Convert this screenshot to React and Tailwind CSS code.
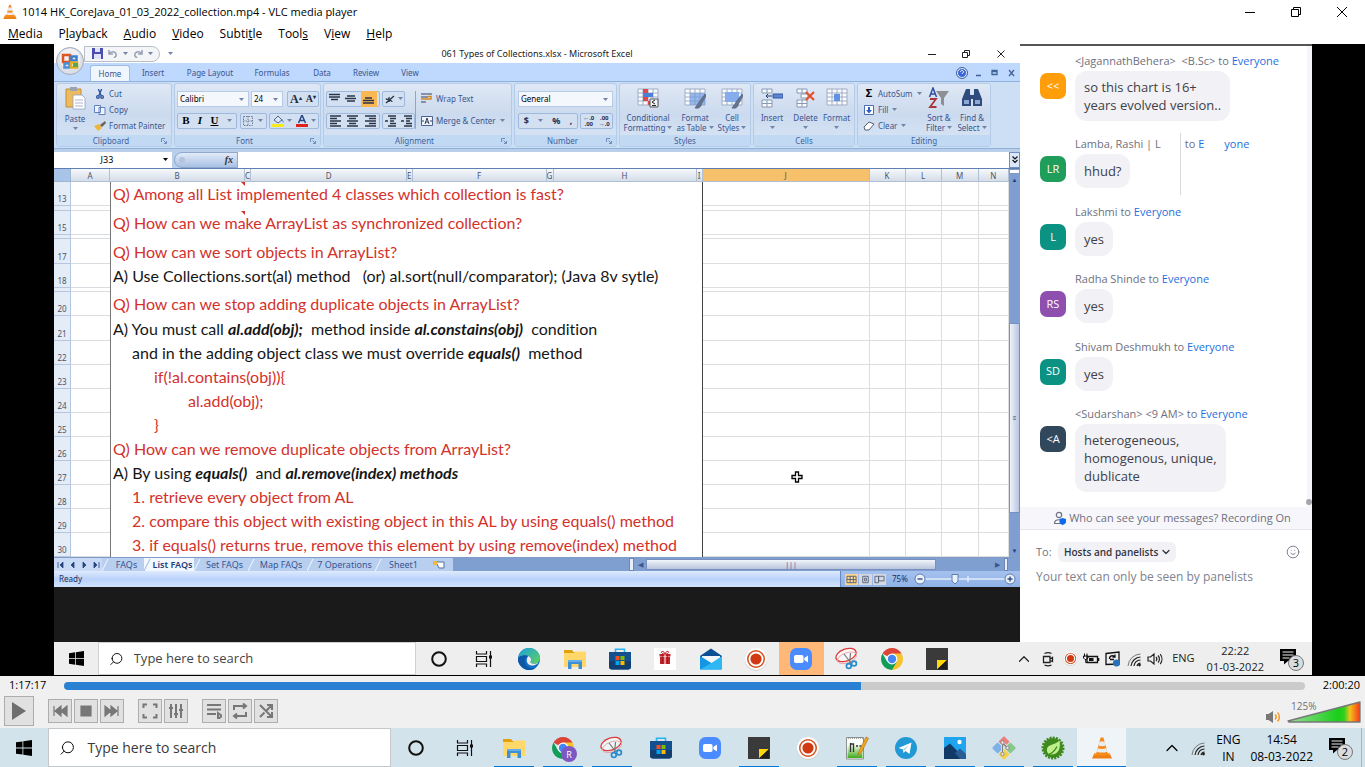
import React from "react";
import { ChevronDown, ChevronUp, Search, Smile } from "lucide-react";

/* ---------- application icons ---------- */

const Cone = ({ className }) => (
  <svg viewBox="0 0 24 24" className={className}>
    <path d="M4.5 17h15l2.5 5.5H2z" fill="#f07f13" />
    <path d="M4.5 17h15l.8 1.8H3.7z" fill="#ffa53a" />
    <path d="M10.6 1.5h2.8L18 18.6c-2.6 1.5-9.4 1.5-12 0z" fill="#f58a1f" />
    <path d="M9.5 5.4h5l1.1 4.2c-2 .8-5.2.8-7.2 0z" fill="#e9edf0" />
    <path d="M7.7 12.3c2.500 1 6.100 1 8.600 0l.9 3.400c-2.900 1.200-7.500 1.200-10.400 0z" fill="#e9edf0" />
  </svg>
);

const WindowsLogo = ({ className }) => (
  <svg viewBox="0 0 16 16" className={className} fill="#000">
    <path d="M0 2.3 6.500 1.400V7.600H0zM7.300 1.300 16 0V7.600H7.300zM0 8.400H6.500V14.600L0 13.700zM7.300 8.400H16V16L7.300 14.700z" />
  </svg>
);

const Cortana = () => (
  <svg viewBox="0 0 24 24" className="size-6">
    <circle cx="12" cy="12" r="6.800" fill="none" stroke="#111" strokeWidth="2" />
  </svg>
);

const TaskView = () => (
  <svg viewBox="0 0 24 24" className="size-6" fill="none" stroke="#111" strokeWidth="1.200">
    <path d="M4.500 4v3h10V4M4.500 20v-3h10v3M4.500 9.500h10v5h-10zM18.500 4v16" />
    <path d="M17 8.500h3v3h-3z" fill="#111" stroke="none" />
  </svg>
);

const Folder = () => (
  <svg viewBox="0 0 24 24" className="size-6">
    <path d="M1 3h8l1.500 2H22v15H1z" fill="#e0a10d" />
    <path d="M1 6h10l1-1.500h11V20H1z" fill="#ffd869" />
    <path d="M5 13h14v9h-3.500v-5h-7v5H5z" fill="#3f8fd6" />
    <path d="M5 13h14v2H5z" fill="#62aeea" />
  </svg>
);

const Edge = () => (
  <svg viewBox="0 0 24 24" className="size-6">
    <defs>
      <linearGradient id="edgeTop" x1="0" x2="1" y1="0" y2="1">
        <stop offset="0" stopColor="#1ca0e0" />
        <stop offset="1" stopColor="#5fd35a" />
      </linearGradient>
    </defs>
    <circle cx="12" cy="12" r="11" fill="#1070c8" />
    <path d="M1.300 11C2.500 4.500 7 1 12 1c6.500 0 11 5 11 9.800 0 4-3 6-6 6-3 0-4-1.300-3.500-2.300 1.500-2 .8-5-2.500-5.700C7 8 3 8.500 1.300 11z" fill="url(#edgeTop)" />
    <path d="M11 9c-3 1.500-4 5-2.500 8 1.700 4 6.500 5.500 10.500 3.500-3 3-8 3.300-12 1C2 18 .3 14 1.300 11 3 8.300 7.500 7.600 11 9z" fill="#0d57a6" />
    <path d="M11.300 9c2.500.8 3.600 3.500 2.200 5.500-.5 1 .7 2.500 3.500 2.300 2 0 3.500-.7 4.500-1.800-1 2.500-4.200 4-7.500 3.500-4-.8-5.700-5.500-2.700-9.500z" fill="#ededed" />
  </svg>
);

const Store = () => (
  <svg viewBox="0 0 24 24" className="size-6">
    <path d="M7.500 6V2.200h9V6" fill="none" stroke="#27b5f0" strokeWidth="1.600" />
    <path d="M1 5h22v14.500c0 2-1 3-3 3H4c-2 0-3-1-3-3z" fill="#12508f" />
    <path d="M1 14h22v5.500c0 2-1 3-3 3H4c-2 0-3-1-3-3z" fill="#123f70" />
    <path d="M7.500 9h4v4h-4z" fill="#f25022" />
    <path d="M12.500 9h4v4h-4z" fill="#7fba00" />
    <path d="M7.500 14h4v4h-4z" fill="#00a4ef" />
    <path d="M12.500 14h4v4h-4z" fill="#ffb900" />
  </svg>
);

const Gift = () => (
  <svg viewBox="0 0 24 24" className="size-6">
    <path d="M1 1h22v22H1z" fill="#fff" />
    <path d="M7 10h10v7H7zM6.500 7h11v2.500h-11z" fill="#c4242a" />
    <path d="M9.400 7v10M14.600 7v10" stroke="#8f1519" strokeWidth=".7" />
    <path d="M11.500 7h1v10h-1z" fill="#fff" />
    <path d="M12 7c-5 0-4-3.500-2-2.500C11.500 5 12 7 12 7s.5-2 2-2.500c2-1 3 2.500-2 2.500z" fill="none" stroke="#c4242a" />
  </svg>
);

const MailIcon = () => (
  <svg viewBox="0 0 24 24" className="size-6">
    <path d="M1 9 12 1.500 23 9v3H1z" fill="#0d4f94" />
    <path d="M3 9h18v7H3z" fill="#f2f7fb" />
    <path d="M1 9v13.500h22z" fill="#1596e2" />
    <path d="M23 9v13.500H1L14 15z" fill="#2fb7f3" />
  </svg>
);

const Recorder = ({ className = "size-6" }) => (
  <svg viewBox="0 0 24 24" className={className}>
    <circle cx="12" cy="12.500" r="11" fill="#b9b1ac" />
    <circle cx="12" cy="12" r="11" fill="#fff" />
    <circle cx="12" cy="12" r="9" fill="#d4501f" />
    <circle cx="12" cy="12" r="7.500" fill="#fff" />
    <circle cx="12" cy="12" r="5.600" fill="#cf3a12" />
  </svg>
);

const Zoom = () => (
  <svg viewBox="0 0 24 24" className="size-6">
    <rect x="1" y="1" width="22" height="22" rx="6.500" fill="#4a8cff" />
    <rect x="5" y="8" width="9.500" height="8" rx="1.800" fill="#fff" />
    <path d="m15.300 11 3.700-2.500v7L15.300 13z" fill="#fff" />
  </svg>
);

const Snip = () => (
  <svg viewBox="0 0 24 24" className="size-6">
    <g transform="rotate(-20 11 8)" fill="none">
      <ellipse cx="11" cy="8" rx="10.500" ry="6" stroke="#dd3c3c" strokeWidth="1.300" fill="#fff" fillOpacity=".6" />
      <ellipse cx="11" cy="11" rx="10" ry="5" stroke="#e8a0a0" strokeWidth=".8" />
    </g>
    <path d="m9 7 7 9M15.500 6l-.8 10" stroke="#777" strokeWidth="1.200" />
    <circle cx="13.800" cy="19" r="2.400" fill="none" stroke="#2b8ccc" strokeWidth="1.700" />
    <circle cx="19" cy="16.500" r="2.400" fill="none" stroke="#2b8ccc" strokeWidth="1.700" />
  </svg>
);

const Chrome = ({ badge }) => (
  <svg viewBox="0 0 24 24" className="size-6 overflow-visible">
    <path d="M12 12 2.500 6.500A11 11 0 0 1 21.500 6.500z" fill="#db4437" />
    <path d="M12 12V6.500h9.500A11 11 0 0 1 12 23z" fill="#f6c32b" />
    <path d="M12 12 7.200 14.800 2.500 6.500A11 11 0 0 0 12 23l4.800-8.200z" fill="#0f9d58" />
    <circle cx="12" cy="12" r="5.400" fill="#fff" />
    <circle cx="12" cy="12" r="4.200" fill="#4285f4" />
    {badge && (
      <g>
        <circle cx="18" cy="18" r="8" fill="#7e57c2" />
        <text x="18" y="21.500" textAnchor="middle" fontSize="9" fontFamily="Open Sans, sans-serif" fill="#fff">{badge}</text>
      </g>
    )}
  </svg>
);

const StickyNote = () => (
  <svg viewBox="0 0 24 24" className="size-6">
    <path d="M1 1h22v22H1z" fill="#3a3a3a" />
    <path d="M12 13h10L12 22.500z" fill="#ffd60a" />
    <path d="M12 22.500 22 13v9.500z" fill="#1f1f1f" />
  </svg>
);

const NotePad = () => (
  <svg viewBox="0 0 24 24" className="size-6">
    <defs>
      <linearGradient id="padFill" x1="0" x2="0" y1="0" y2="1">
        <stop offset="0" stopColor="#f4fbe9" />
        <stop offset="1" stopColor="#3fa91c" />
      </linearGradient>
    </defs>
    <path d="M1.500 1.500h17V23h-17z" fill="#fbfdf8" stroke="#777" strokeWidth=".8" />
    <path d="M2.500 9h15v13h-15z" fill="url(#padFill)" />
    <path d="M3 2h15" stroke="#888" strokeWidth="1.500" strokeDasharray="1 1" />
    <path d="M5.500 7v9M5.500 8h3v8M11 10h2M14.500 10h2" stroke="#333" strokeWidth="1.300" fill="none" />
    <path d="m13 19 1-4L21 1l2.500 1.200-7 14z" fill="#f3a51d" stroke="#a86a12" strokeWidth=".6" />
  </svg>
);

const Telegram = () => (
  <svg viewBox="0 0 24 24" className="size-6">
    <circle cx="12" cy="12" r="11" fill="#2298d4" />
    <path d="m4.500 12 13-5.500L15.500 18l-4-3-2 2-.5-3.500z" fill="#fff" />
    <path d="m9 13.500 6-4.500-4.500 5.500z" fill="#a9cfe6" />
  </svg>
);

const Photos = () => (
  <svg viewBox="0 0 24 24" className="size-6">
    <path d="M1 1h22v22H1z" fill="#1fa4ee" />
    <path d="M1 12 7 7.500 22 23H1z" fill="#123a66" />
    <path d="m12 17 5-4.500 6 5.500v5H17z" fill="#2a5d94" />
    <circle cx="16.500" cy="6" r="2.200" fill="#fff" />
  </svg>
);

const GitIcon = () => (
  <svg viewBox="0 0 24 24" className="size-6">
    <g transform="rotate(45 12 12)">
      <rect x="3.500" y="3.500" width="8" height="8" rx="1" fill="#ef7f7f" />
      <rect x="12.500" y="3.500" width="8" height="8" rx="1" fill="#86c98a" />
      <rect x="3.500" y="12.500" width="8" height="8" rx="1" fill="#7fb0e8" />
      <rect x="12.500" y="12.500" width="8" height="8" rx="1" fill="#f2d24b" />
    </g>
    <path d="M10.500 6v12M10.500 7l5 5" stroke="#e6e6e6" strokeWidth="3" fill="none" />
    <path d="M10.500 6v12M10.500 7l5 5" stroke="#7d7d7d" strokeWidth="1.200" fill="none" />
    <circle cx="10.500" cy="6.500" r="1.700" fill="#e6e6e6" stroke="#7d7d7d" strokeWidth=".8" />
    <circle cx="15.500" cy="12" r="1.700" fill="#e6e6e6" stroke="#7d7d7d" strokeWidth=".8" />
    <circle cx="10.500" cy="18" r="1.700" fill="#e6e6e6" stroke="#7d7d7d" strokeWidth=".8" />
  </svg>
);

const Spring = () => (
  <svg viewBox="0 0 24 24" className="size-6">
    <circle cx="12" cy="12" r="10.300" fill="none" stroke="#3f8a1f" strokeWidth="2.400" strokeDasharray="2 1.200" />
    <circle cx="12" cy="12" r="10" fill="#3f8a1f" />
    <path d="M18.500 4.500c1.500 8.500-1.500 14-8 14-3 0-5-2-4.500-5.500C6.500 8 14 9.500 18.500 4.500z" fill="#c0f08c" />
    <path d="M4.500 19.500c5-1 9-3.500 11.500-9" stroke="#3f8a1f" strokeWidth="1.300" fill="none" />
  </svg>
);

/* ---------- tray icons ---------- */

const Wifi = () => (
  <svg viewBox="0 0 16 16" className="size-4" fill="none" stroke="#222">
    <path d="M2 15A13 13 0 0 1 14.500 3" stroke="#777" />
    <path d="M5 15a10 10 0 0 1 9.500-9M8 15a7 7 0 0 1 6.500-6M11 15a4 4 0 0 1 3.500-3" strokeWidth="1.200" />
    <circle cx="13.500" cy="14" r="1.400" fill="#222" stroke="none" />
  </svg>
);

const Notice = ({ count }) => (
  <span className="relative flex size-5 items-start">
    <svg viewBox="0 0 18 16" className="h-4 w-[18px]">
      <path d="M0 0h16v12H8l-4 3.500V12H0z" fill="#000" />
      <path d="M2.500 3h11M2.500 6h11M2.500 9h7" stroke="#eee" />
    </svg>
    <span className="absolute top-1.5 left-2 flex size-4 items-center justify-center rounded-full border border-[#777] bg-[#d9dcde] text-[11px] leading-none text-black">
      {count}
    </span>
  </span>
);

const Speaker = () => (
  <svg viewBox="0 0 18 16" className="h-4 w-[18px]" fill="none" stroke="#222" strokeWidth="1.200">
    <path d="M2 6h2.500L8 3v10l-3.500-3H2zM10 6a3 3 0 0 1 0 4M12 4.500a5 5 0 0 1 0 7M14.200 3a8 8 0 0 1 0 10" />
  </svg>
);

const MeetNow = () => (
  <svg viewBox="0 0 16 16" className="size-4" fill="none" stroke="#222" strokeWidth="1.300">
    <path d="M3.500 5.500h6.500v6H3.500zM10 8l2.500-1.500v4L10 9.500M4.500 2.500c2-1 5-1 7 0M4.500 14c2 1 5 1 7 0" />
  </svg>
);

const Battery = () => (
  <svg viewBox="0 0 18 16" className="h-4 w-[18px]">
    <path d="M5 5.500h10.500v6H5z" fill="none" stroke="#111" strokeWidth="1.300" />
    <path d="M7 7h4.500v3H7zM16 7h1.300v3H16z" fill="#111" />
    <path d="M2.500 2.500v3M5 2.500v3M1.500 5h4.500v2L4.500 8.500H3L1.500 7zM3.700 8.500v3h2" stroke="#111" fill="none" />
  </svg>
);

const Screen = () => (
  <svg viewBox="0 0 18 16" className="h-4 w-[18px]" fill="none" stroke="#111" strokeWidth="1.300">
    <path d="M2 2.500 15 1v12L2 13.500z" />
    <path d="M5.500 8A3 3 0 0 1 11 6M11 3.500V6H8.500M6 8.500h4" />
    <circle cx="12.500" cy="12" r="3.500" fill="#2a6fb8" stroke="none" />
  </svg>
);

/* ---------- taskbars ---------- */

const INNER_APPS = [
  { name: "Cortana", icon: <Cortana /> },
  { name: "Task View", icon: <TaskView /> },
  { name: "Edge", icon: <Edge /> },
  { name: "File Explorer", icon: <Folder /> },
  { name: "Store", icon: <Store /> },
  { name: "Gifts", icon: <Gift /> },
  { name: "Mail", icon: <MailIcon /> },
  { name: "Recorder", icon: <Recorder /> },
  { name: "Zoom", icon: <Zoom />, active: true },
  { name: "Snipping Tool", icon: <Snip /> },
  { name: "Chrome", icon: <Chrome /> },
  { name: "Sticky Notes", icon: <StickyNote /> },
];

const OUTER_APPS = [
  { name: "Cortana", icon: <Cortana /> },
  { name: "Task View", icon: <TaskView /> },
  { name: "File Explorer", icon: <Folder />, open: true },
  { name: "Chrome", icon: <Chrome badge="R" />, open: true },
  { name: "Snipping Tool", icon: <Snip />, open: true },
  { name: "Store", icon: <Store /> },
  { name: "Zoom", icon: <Zoom /> },
  { name: "Sticky Notes", icon: <StickyNote />, open: true },
  { name: "Recorder", icon: <Recorder /> },
  { name: "Notepad++", icon: <NotePad />, open: true },
  { name: "Telegram", icon: <Telegram />, open: true },
  { name: "Photos", icon: <Photos />, open: true },
  { name: "Git", icon: <GitIcon />, open: true },
  { name: "Spring Tool Suite", icon: <Spring />, open: true },
  { name: "VLC", icon: <Cone className="size-6" />, open: true, active: true },
];

function InnerTaskbar() {
  return (
    <div className="flex h-[34px] shrink-0 items-stretch border-b border-black bg-[#eeeeee] text-[11px] text-[#222]">
      <button aria-label="Start" className="flex w-[44px] items-center justify-center"><WindowsLogo className="size-[15px]" /></button>
      <label className="flex w-[318px] items-center gap-2.5 border border-[#d0d0d0] bg-white pl-2.5">
        <Search className="size-4 -scale-x-100 text-black" strokeWidth={1.5} />
        <input aria-label="Search shared desktop" placeholder="Type here to search" className="w-full text-[13px] outline-none placeholder:text-[#444]" />
      </label>
      <div className="flex w-[544px]">
        {INNER_APPS.map((a) => (
          <button key={a.name} aria-label={a.name} className={"flex flex-1 items-center justify-center " + (a.active ? "bg-[#ffb878]" : "")}>
            {a.icon}
          </button>
        ))}
      </div>
      <div className="ml-auto flex items-center gap-1 pr-3">
        <ChevronUp className="size-[18px]" strokeWidth={1.6} />
        <span className="flex w-[22px] justify-center"><MeetNow /></span>
        <Recorder className="size-[15px]" />
        <Battery />
        <Screen />
        <Wifi />
        <Speaker />
        <span className="ml-1">ENG</span>
        <span className="ml-2 flex flex-col items-center leading-4"><span>22:22</span><span>01-03-2022</span></span>
        <span className="ml-3"><Notice count="3" /></span>
      </div>
    </div>
  );
}

function OuterTaskbar() {
  return (
    <footer className="flex h-[39px] shrink-0 items-stretch bg-[#d3e3ec] text-[12px] text-black">
      <button aria-label="Start menu" className="flex w-[48px] items-center justify-center"><WindowsLogo className="size-4" /></button>
      <label className="flex w-[343px] items-center gap-3 border border-[#c4c8ca] bg-white pl-2.5">
        <Search className="size-[18px] -scale-x-100 text-black" strokeWidth={1.400} />
        <input aria-label="Search" placeholder="Type here to search" className="w-full text-[14px] outline-none placeholder:text-[#3a3a3a]" />
      </label>
      {OUTER_APPS.map((a) => (
        <button key={a.name} aria-label={a.name} className={"flex w-[49px] flex-col items-center justify-end " + (a.active ? "bg-[#eef4f8]" : "")}>
          <span className="flex flex-1 items-center pt-0.5">{a.icon}</span>
          <span className={"h-px " + (a.open ? (a.active ? "w-full bg-[#0078d7]" : "w-10 bg-[#0078d7]") : "w-0")} />
        </button>
      ))}
      <div className="ml-auto flex items-center gap-2 pr-[3px]">
        <ChevronUp className="size-5" strokeWidth={1.500} />
        <Wifi />
        <span className="flex w-7 flex-col items-center leading-[17px]"><span>ENG</span><span>IN</span></span>
        <span className="flex flex-col items-center leading-[17px]"><span>14:54</span><span>08-03-2022</span></span>
        <span className="ml-2"><Notice count="2" /></span>
        <span className="ml-1 h-full w-px self-stretch bg-[#a9b6bd]" />
      </div>
    </footer>
  );
}

/* ---------- spreadsheet ribbon ---------- */

const Caret = () => (
  <svg viewBox="0 0 5 3" className="h-[3px] w-[5px] shrink-0"><path d="M0 0h5L2.500 3z" fill="#7284a8" /></svg>
);

function Group({ label, launcher, className, children }) {
  return (
    <section className={"flex flex-col overflow-hidden rounded-[3px] border border-[#b4cbe8] bg-linear-to-b from-[#dfe8f5] via-[#cbdaee] to-[#d8e6f6] " + className}>
      <div className="flex flex-1 items-center">{children}</div>
      <div className="flex h-[11px] items-center bg-[#c1d9f3] px-1 text-[#41639d]">
        <span className="flex-1 text-center">{label}</span>
        {launcher && <svg viewBox="0 0 6 6" className="size-1.5" fill="none" stroke="#6f8cb8"><path d="M.5 4V.5H4M2.500 2.500 5 5M5.500 3v2.500H3" /></svg>}
      </div>
    </section>
  );
}

const Box = ({ className, children }) => (
  <div className={"flex h-4 items-center justify-around rounded-[2px] border border-[#9fb9dd] bg-[#d3e0f2] " + (className || "")}>{children}</div>
);

function RibbonSelect({ label, value, className }) {
  return (
    <span className={"relative flex h-4 items-center border border-[#b6cbe6] bg-[#f4f8fd] " + className}>
      <select aria-label={label} defaultValue={value} className="w-full appearance-none bg-transparent px-0.5 text-[8px] text-black outline-none">
        <option>{value}</option>
      </select>
      <span className="absolute top-1.5 right-1"><Caret /></span>
    </span>
  );
}

const LINE_SETS = {
  top: "M0 1.500h11M0 4h11M2 6.500h7",
  middle: "M2 3h8M0 5.500h11M2 8h8",
  bottom: "M2 5h7M0 7.500h11M0 10h11",
  left: "M0 1h11M0 3.500h7M0 6h11M0 8.500h7M0 11h11",
  center: "M0 1h11M2 3.500h7M0 6h11M2 8.500h7M0 11h11",
  right: "M0 1h11M4 3.500h7M0 6h11M4 8.500h7M0 11h11",
  indent: "M3 1h8M5 3.500h6M5 6h4M5 8.500h6M3 11h8M0 6h3",
};

const Lines = ({ kind }) => (
  <svg viewBox="0 0 11 12" className="h-3 w-[11px]" fill="none" stroke="#2b3549" strokeWidth="1.300"><path d={LINE_SETS[kind]} /></svg>
);

const GridGlyph = ({ children }) => (
  <svg viewBox="0 0 22 22" className="size-[22px]">
    <path d="M1 2h20v16H1z" fill="#f8fafd" />
    <path d="M1 2h20v16H1zM1 6h20M1 10h20M1 14h20M6 2v16M11 2v16M16 2v16" fill="none" stroke="#98a6bf" strokeWidth=".9" />
    {children}
  </svg>
);

const Brush = () => <path d="m21 7-6 8-4 6c4 1 6-1 6.500-4L22 9z" fill="#6a7486" stroke="#3d5b8f" strokeWidth=".6" />;

function BigButton({ icon, lines, className }) {
  return (
    <button className={"flex flex-col items-center leading-[10px] " + className}>
      {icon}
      <span className="mt-1 whitespace-nowrap">{lines[0]}</span>
      <span className="flex h-2.5 items-center gap-0.5 whitespace-nowrap">{lines[1]}<Caret /></span>
    </button>
  );
}

const SmallButton = ({ icon, children, caret }) => (
  <button className="flex h-4 items-center gap-0.5 whitespace-nowrap"><span className="flex w-3.5 justify-center">{icon}</span>{children}{caret && <span className="ml-0.5"><Caret /></span>}</button>
);

function Ribbon() {
  return (
    <div className="flex h-[68px] gap-0.5 border-t border-b border-[#8fb0dc] bg-[#cddff5] px-0.5 py-px text-[8px] text-[#3a5590]">
      <Group label="Clipboard" launcher className="w-[116px]">
        <BigButton className="w-[36px]" lines={["Paste", ""]} icon={
          <svg viewBox="0 0 22 24" className="h-6 w-[22px]">
            <path d="M2 3h15v18H2z" fill="#edbb5d" stroke="#c28f36" /><path d="M6 1h7v4H6z" fill="#9aa3b0" />
            <path d="M9 9h9l3 3v11H9z" fill="#fff" stroke="#93a3c0" strokeWidth=".8" /><path d="M11 14h8M11 17h8M11 20h8" stroke="#a9b7d0" />
          </svg>} />
        <div className="flex flex-col">
          <SmallButton icon={<svg viewBox="0 0 10 12" className="h-2.5 w-2.5" fill="none" stroke="#2d519b" strokeWidth="1.600"><path d="m3 0 3.500 8M7 0 3.500 8" /><circle cx="2.500" cy="9.500" r="1.600" /><circle cx="7.500" cy="9.500" r="1.600" /></svg>}>Cut</SmallButton>
          <SmallButton icon={<svg viewBox="0 0 12 10" className="h-2.5 w-3"><path d="M.5.500h6v7h-6zM5 2.500h6v7H5z" fill="#eef4fd" stroke="#5377b5" strokeWidth=".9" /></svg>}>Copy</SmallButton>
          <SmallButton icon={<svg viewBox="0 0 12 10" className="h-2.5 w-3"><path d="m0 5 5-2 3 4-4 3z" fill="#ecb53f" /><path d="m6 4 5-4 1 2-4 4z" fill="#6d6250" /></svg>}>Format Painter</SmallButton>
        </div>
      </Group>

      <Group label="Font" launcher className="w-[147px]">
        <div className="flex flex-1 flex-col gap-1.5 px-0.5">
          <div className="flex items-center gap-0.5">
            <RibbonSelect label="Font" value="Calibri" className="w-[72px]" />
            <RibbonSelect label="Font size" value="24" className="w-[32px]" />
            <Box className="ml-0.5 w-[32px] font-['Liberation_Serif',serif] font-bold text-[#222c40]"><button className="text-[12px]">A<sup className="text-[6px]">▴</sup></button><button className="text-[10px]">A<sup className="text-[6px]">▾</sup></button></Box>
          </div>
          <div className="flex items-center justify-between">
            <Box className="w-[60px] font-['Liberation_Serif',serif] text-[11px] text-black"><button className="font-bold">B</button><button className="font-bold italic">I</button><button className="font-bold underline">U</button><Caret /></Box>
            <Box className="w-[27px]"><svg viewBox="0 0 10 10" className="size-2.5" fill="none" stroke="#6c7b98" strokeDasharray="1.500 1"><path d="M.5.500h9v9h-9zM5 0v10M0 5h10" /></svg><Caret /></Box>
            <Box className="w-[50px]">
              <svg viewBox="0 0 12 12" className="size-3"><path d="m2 5 4-4 4 4-4 3z" fill="#dce6f5" stroke="#50638c" /><path d="M10 4c2 2 1.500 3 1 4z" fill="#2d6cc8" /><path d="M0 9h12v3H0z" fill="#f6ea1c" /></svg><Caret />
              <svg viewBox="0 0 12 12" className="size-3"><path d="m2.500 8 3.500-8 3.500 8M4 5.500h4" fill="none" stroke="#28458c" strokeWidth="1.500" /><path d="M0 9h12v3H0z" fill="#e3211a" /></svg><Caret />
            </Box>
          </div>
        </div>
      </Group>

      <Group label="Alignment" launcher className="w-[189px]">
        <div className="flex w-[92px] flex-col gap-1.5 border-r border-[#8ca6cc] pl-0.5">
          <div className="flex gap-0.5">
            <Box className="w-[54px]"><Lines kind="top" /><Lines kind="middle" /><span className="flex h-4 w-4 items-center justify-center bg-[#fbb753]"><Lines kind="bottom" /></span></Box>
            <Box className="w-[23px]"><svg viewBox="0 0 10 10" className="size-2.5" fill="none" stroke="#222c40" strokeWidth="1.200"><path d="M1 9 9 2M1 4.500a1.500 1.500 0 1 0 3-1.500M4 8c0-2 3-2 3 0" /></svg><Caret /></Box>
          </div>
          <div className="flex gap-0.5">
            <Box className="w-[54px]"><Lines kind="left" /><Lines kind="center" /><Lines kind="right" /></Box>
            <Box className="w-[33px]"><Lines kind="indent" /><Lines kind="indent" /></Box>
          </div>
        </div>
        <div className="flex flex-col gap-1.5 pl-1">
          <SmallButton icon={<svg viewBox="0 0 12 11" className="h-[11px] w-3" fill="none"><path d="M0 1h11M0 4h7M0 9h5" stroke="#33415f" /><path d="M0 6h10V3.500H7" stroke="#d48a1c" strokeWidth="1.500" /></svg>}>Wrap Text</SmallButton>
          <SmallButton caret icon={<svg viewBox="0 0 12 10" className="h-2.5 w-3"><path d="M.5.500h11v9H.500z" fill="#f2f6fc" stroke="#4c648f" /><path d="M4 8l2-6 2 6M4.500 6h3M1 5h2M9 5h2" stroke="#33415f" fill="none" /></svg>}>Merge &amp; Center</SmallButton>
        </div>
      </Group>

      <Group label="Number" launcher className="w-[103px]">
        <div className="flex flex-1 flex-col gap-1.5 px-[3px]">
          <RibbonSelect label="Number format" value="General" className="w-full" />
          <div className="flex gap-0.5">
            <Box className="w-[60px] text-[9px] font-bold text-[#1f2d4f]"><button>$</button><Caret /><button>%</button><button>,</button></Box>
            <Box className="flex-1 text-[6px] leading-[6px] font-bold text-[#1f2d4f]"><button>←.0<br />.00</button><button>.00<br />→.0</button></Box>
          </div>
        </div>
      </Group>

      <Group label="Styles" className="w-[132px]">
        <BigButton className="w-[56px]" lines={["Conditional", "Formatting"]} icon={<GridGlyph><path d="M6 2h5v4H6zM6 10h5v4H6zM11 14h5v4h-5z" fill="#dd4a4a" /><path d="M6 6h10v4H6z" fill="#4d80d4" /><path d="M13 12h8v8h-8z" fill="#eef2f8" stroke="#555" /><path d="m18 13-3 2 3 2M15 18.500h4" stroke="#222" fill="none" /></GridGlyph>} />
        <BigButton className="w-[38px]" lines={["Format", "as Table"]} icon={<GridGlyph><path d="M6 6h15v12H6z" fill="#6f9be0" fillOpacity=".7" /><Brush /></GridGlyph>} />
        <BigButton className="w-[36px]" lines={["Cell", "Styles"]} icon={<GridGlyph><path d="M4 5h14v10H4z" fill="#85acec" /><Brush /></GridGlyph>} />
      </Group>

      <Group label="Cells" className="w-[102px]">
        <BigButton className="w-[36px]" lines={["Insert", ""]} icon={<svg viewBox="0 0 22 22" className="size-[22px]"><path d="M1 2h10v4H1zM1 13h10v7H1zM6 2v4M6 13v7M1 16.500h10" fill="#f8fafd" stroke="#8898b5" /><path d="M12 7h10v4H12z" fill="#5f86d4" stroke="#33579f" /><path d="M11 9H5m2-2L5 9l2 2" stroke="#223f77" fill="none" /></svg>} />
        <BigButton className="w-[31px]" lines={["Delete", ""]} icon={<svg viewBox="0 0 22 22" className="size-[22px]"><path d="M2 2h10v4H2zM6 7h7v4H6zM2 13h10v7H2zM7 2v4M7 13v7M2 16.500h10" fill="#f8fafd" stroke="#8898b5" /><path d="m11 5 8 8M19 5l-8 8" stroke="#e4502e" strokeWidth="2.200" /></svg>} />
        <BigButton className="w-[31px]" lines={["Format", ""]} icon={<GridGlyph><path d="M8 7h6v7H8z" fill="#5f92e4" /></GridGlyph>} />
      </Group>

      <Group label="Editing" className="w-[134px]">
        <div className="flex w-[64px] flex-col pl-1">
          <SmallButton caret icon={<b className="text-[11px] text-black">Σ</b>}>AutoSum</SmallButton>
          <SmallButton caret icon={<svg viewBox="0 0 10 10" className="size-2.5"><path d="M.5.500h9v9h-9z" fill="#fff" stroke="#4a6db0" /><path d="M4 2h2v3h2L5 8.500 2 5h2z" fill="#2d5fc4" /></svg>}>Fill</SmallButton>
          <SmallButton caret icon={<svg viewBox="0 0 12 10" className="h-2.5 w-3"><path d="m1 6 5-5 5 2-5 6H2z" fill="#fff" stroke="#555f74" /></svg>}>Clear</SmallButton>
        </div>
        <BigButton className="w-[34px]" lines={["Sort &", "Filter"]} icon={<svg viewBox="0 0 22 22" className="size-[22px]"><path d="m1.500 10 3.500-9 3.500 9M3 7h4" fill="none" stroke="#2c50a0" strokeWidth="1.500" /><path d="M2 12h6l-6 8h6.500" fill="none" stroke="#a8343c" strokeWidth="1.800" /><path d="M8 4h13l-5 7v8l-3-2v-6z" fill="#8f8f93" /></svg>} />
        <BigButton className="w-[32px]" lines={["Find &", "Select"]} icon={<svg viewBox="0 0 22 22" className="size-[22px]" fill="#2f4a7d"><path d="M5 2h4v5l1 3v9H1v-7zM13 2h4l4 10v7h-9v-9l1-3zM9 8h4v4H9z" /><path d="M3 13h5v4H3zM14 13h5v4h-5z" fill="#8fa8d4" /></svg>} />
      </Group>
    </div>
  );
}

/* ---------- spreadsheet grid ---------- */

const COLUMNS = [
  ["A", "w-[39px]"], ["B", "w-[135px]"], ["C", "w-[6px]"], ["D", "w-[156px]"], ["E", "w-[5px]"], ["F", "w-[134px]"], ["G", "w-[7px]"],
  ["H", "w-[143px]"], ["I", "w-[6px]"], ["J", "w-[167px]"], ["K", "w-[36px]"], ["L", "w-[36px]"], ["M", "w-[37px]"], ["N", ""],
];

const ROWS = [
  { n: 13, h: "h-[24px]", note: true, q: true, t: "Q) Among all List implemented 4 classes which collection is fast?" },
  { n: 14, h: "h-[5px]", thin: true },
  { n: 15, h: "h-[24px]", note: true, q: true, t: "Q) How can we make ArrayList as synchronized collection?" },
  { n: 16, h: "h-[4px]", thin: true },
  { n: 17, h: "h-[25px]", q: true, t: "Q) How can we sort objects in ArrayList?" },
  { n: 18, h: "h-[24px]", t: "A) Use Collections.sort(al) method   (or) al.sort(null/comparator); (Java 8v sytle)" },
  { n: 19, h: "h-[4px]", thin: true },
  { n: 20, h: "h-[24px]", q: true, t: "Q) How can we stop adding duplicate objects in ArrayList?" },
  { n: 21, h: "h-[25px]", t: <>A) You must call <b><i>al.add(obj);</i></b>  method inside <b><i>al.constains(obj)</i></b>  condition</> },
  { n: 22, h: "h-[24px]", pad: "pl-[21px]", t: <>and in the adding object class we must override <b><i>equals()</i></b>  method</> },
  { n: 23, h: "h-[24px]", q: true, pad: "pl-[43px]", t: "if(!al.contains(obj)){" },
  { n: 24, h: "h-[24px]", q: true, pad: "pl-[77px]", t: "al.add(obj);" },
  { n: 25, h: "h-[24px]", q: true, pad: "pl-[43px]", t: "}" },
  { n: 26, h: "h-[24px]", q: true, t: "Q) How can we remove duplicate objects from ArrayList?" },
  { n: 27, h: "h-[24px]", t: <>A) By using <b><i>equals()</i></b>  and <b><i>al.remove(index) methods</i></b></> },
  { n: 28, h: "h-[24px]", q: true, pad: "pl-[21px]", t: "1. retrieve every object from AL" },
  { n: 29, h: "h-[24px]", q: true, pad: "pl-[21px]", t: "2. compare this object with existing object in this AL by using equals() method" },
  { n: 30, h: "h-[24px]", q: true, pad: "pl-[21px]", t: "3. if equals() returns true, remove this element by using remove(index) method" },
];

function Sheet() {
  return (
    <div className="relative flex">
      <table className="min-w-0 flex-1 table-fixed border-separate border-spacing-0 bg-white">
        <colgroup>
          <col className="w-[17px]" />
          {COLUMNS.map(([c, w]) => <col key={c} className={w} />)}
        </colgroup>
        <thead>
          <tr className="h-[13px] text-[8px] leading-[11px] text-[#4a5368]">
            <th className="border-r border-b border-[#9eb6ce] bg-[#a9c4e9] p-0" />
            {COLUMNS.map(([c]) => (
              <th key={c} className={"overflow-hidden border-r border-b border-[#b0bfd2] p-0 text-center font-normal " + (c === "J" ? "bg-[#f7c16c]" : "bg-linear-to-b from-[#f6f9fc] to-[#d5dde9]")}>{c}</th>
            ))}
          </tr>
        </thead>
        <tbody>
          {ROWS.map((r) => (
            <tr key={r.n} className={r.h}>
              <th className="border-r border-b border-[#b6c6de] bg-[#e4ecf7] p-0 text-center align-bottom text-[8px] leading-3 font-normal text-[#4a5368]">{r.thin ? null : r.n}</th>
              <td className="border-b border-[#d9dce1] p-0" />
              <td colSpan={8} className="relative border-r border-l border-r-[#444] border-l-[#777] p-0">
                {!r.thin && (
                  <div className={"font-['Lato',sans-serif] text-[16px] leading-[24px] whitespace-pre [font-variant-ligatures:none] " + (r.pad || "pl-0.5") + (r.q ? " text-[#d3322b]" : " text-[#161616]")}>{r.t}</div>
                )}
                {r.note && <svg viewBox="0 0 4 4" className="absolute top-0 left-[130px] size-1"><path d="M0 0h4v4z" fill="#d3322b" /></svg>}
              </td>
              {["J", "K", "L", "M", "N"].map((c) => <td key={c} className="border-r border-b border-[#dedede] p-0" />)}
            </tr>
          ))}
        </tbody>
      </table>
      <div className="flex w-[11px] flex-col items-center bg-[#7f9fd3] text-[6px] leading-3 text-[#24406f]">
        <span className="h-[5px] w-full border border-[#8299c4] bg-white" />
        <span>▲</span>
        <span className="mt-auto mb-8 flex h-[190px] w-full items-center justify-center border border-[#7790c0] bg-linear-to-r from-[#eef2fa] to-[#b9c6e0]">≡</span>
        <span>▼</span>
      </div>
      <svg viewBox="0 0 12 12" className="absolute top-[302px] left-[737px] size-3"><path d="M4.500 1h3v3.500H11v3H7.500V11h-3V7.500H1v-3h3.500z" fill="#fff" stroke="#000" strokeWidth="1.300" /></svg>
    </div>
  );
}

const SHEETS = [["FAQs", "w-[42px]"], ["List FAQs", "w-[50px]"], ["Set FAQs", "w-[54px]"], ["Map FAQs", "w-[59px]"], ["7 Operations", "w-[68px]"], ["Sheet1", "w-[50px]"]];

function SheetTabs() {
  return (
    <div className="flex h-[14px] border-t border-[#7f9cc9] bg-[#7f9fd0] text-[9px] leading-[12px] text-[#3a5590]">
      <div className="flex w-[48px] items-center justify-around bg-[#c8daf5]">
        {["M1 0v6M6 0 3 3l3 3z", "M5 0 2 3l3 3z", "M2 0l3 3-3 3z", "M6 0v6M1 0l3 3-3 3z"].map((d) => (
          <svg key={d} viewBox="0 0 7 6" className="h-1.5 w-[7px]" fill="#27447f" stroke="#27447f" strokeWidth=".8"><path d={d} /></svg>
        ))}
      </div>
      {SHEETS.map(([name, w]) => (
        <button key={name} className={"flex items-center justify-between whitespace-nowrap " + w + (name === "List FAQs" ? " bg-[#f3f8ff] font-semibold text-[#1f3b78]" : " bg-[#b9cff0]")}>
          <svg viewBox="0 0 7 13" className="h-[13px] w-[7px] shrink-0" fill="none" stroke={name === "List FAQs" ? "#9db6de" : "#f5f9ff"}><path d="M0 13 6 1" /></svg>
          <span className="flex-1 text-center">{name}</span>
        </button>
      ))}
      <span className="flex w-[28px] items-center justify-center bg-[#b9cff0]"><svg viewBox="0 0 12 10" className="h-2.5 w-3"><path d="M3 2h8v6H6z" fill="#fff" stroke="#556f9f" /><path d="M0 1h4v4H0z" fill="#f0b93e" /></svg></span>
      <div className="ml-auto flex w-[391px] items-center text-[7px]">
        <span className="h-full w-[5px] border border-[#6c88bb] bg-[#e8eefa]" />
        <span className="w-[12px] text-center">◀</span>
        <span className="flex h-[11px] w-[290px] items-center justify-center border border-[#7790c0] bg-linear-to-b from-[#f2f5fb] to-[#b8c5dd]">|||</span>
        <span className="ml-auto">▶</span>
        <span className="mr-3 ml-1 h-full w-1 border border-[#6c88bb] bg-[#e8eefa]" />
      </div>
    </div>
  );
}

function StatusBar() {
  return (
    <div className="flex h-[16px] items-center bg-linear-to-b from-[#dfebfe] via-[#b9d2fa] to-[#d3e3fd] pl-[5px] text-[8px] text-[#1c2f57]">
      <span>Ready</span>
      <div className="ml-auto flex h-full w-[180px] items-center gap-1 border-l border-[#6787bf] bg-linear-to-b from-[#a5c1ee] to-[#8fb1e6] pl-1">
        <div className="flex gap-px">
          {["M1 1h10v7H1zM1 4.500h10M4.500 1v7M8 1v7", "M3 1h6v7H3zM5 3h2v3H5z", "M1 1h4v7H1zM5 1h6v5H5z"].map((d, i) => (
            <button key={d} aria-label={"View " + (i + 1)} className={"px-px " + (i === 0 ? "bg-[#fcd58a]" : "bg-[#d5d9e2]")}><svg viewBox="0 0 12 9" className="h-[11px] w-[11px]" fill="none" stroke="#55607a"><path d={d} /></svg></button>
          ))}
        </div>
        <span className="ml-0.5">75%</span>
        <svg viewBox="0 0 104 12" className="ml-0.5 h-3 w-[104px]">
          <path d="M8 6h86M54 3v6" stroke="#e3ecfa" strokeWidth="1.400" />
          <circle cx="6" cy="6" r="5" fill="#eaf0fa" stroke="#5f7cb0" /><path d="M3.500 6h5" stroke="#33507f" strokeWidth="1.400" />
          <circle cx="96" cy="6" r="5" fill="#eaf0fa" stroke="#5f7cb0" /><path d="M93.500 6h5M96 3.500v5" stroke="#33507f" strokeWidth="1.400" />
          <path d="M38 1.500h6V8l-3 3-3-3z" fill="#eaf0fa" stroke="#5f7cb0" />
        </svg>
      </div>
    </div>
  );
}

function Excel() {
  return (
    <div className="relative flex flex-col font-['Noto_Sans',sans-serif]">
      <div className="grid h-[19px] grid-cols-[1fr_auto_1fr] items-center bg-white text-[9px] text-[#222]">
        <div className="flex items-center gap-2 pl-[30px]">
          <div className="flex h-4 w-[76px] items-center justify-around rounded-r-full border border-[#b9bfca] bg-[#f4f5f7] px-1 text-[#98a0ae]">
            <svg viewBox="0 0 11 11" className="size-[11px]"><path d="M0 0h11v11H0z" fill="#4a4fb0" /><path d="M3 0h5v4H3zM2 6h7v5H2z" fill="#dfe3f5" /></svg>
            <svg viewBox="0 0 10 8" className="h-2 w-2.5" fill="none" stroke="#9aa3b4" strokeWidth="1.600"><path d="M1 0v4h4M1 4c3-4 8-2 7 2L6 8" /></svg>
            <Caret />
            <svg viewBox="0 0 10 8" className="h-2 w-2.5" fill="none" stroke="#9aa3b4" strokeWidth="1.600"><path d="M9 0v4H5M9 4C6 0 1 2 2 6l2 2" /></svg>
            <Caret />
          </div>
          <Caret />
        </div>
        <h2>061 Types of Collections.xlsx - Microsoft Excel</h2>
        <svg viewBox="0 0 80 10" className="mr-[13px] h-2.5 w-20 justify-self-end" fill="none" stroke="#222"><path d="M1 5.500h8M35.500 3.500h5v5h-5zM37.500 3.500v-2h5v5h-2M70.500 1.500l7 7M77.500 1.500l-7 7" /></svg>
      </div>
      <nav className="flex h-[18px] items-end bg-[#bfd8fd] pl-[36px] text-[8px] text-[#3a5590]">
        {[["Home", "w-[40px]"], ["Insert", "w-[46px]"], ["Page Layout", "w-[68px]"], ["Formulas", "w-[56px]"], ["Data", "w-[44px]"], ["Review", "w-[44px]"], ["View", "w-[44px]"]].map(([t, w], i) => (
          <button key={t} className={"h-4 " + w + (i === 0 ? " rounded-t-[3px] border border-b-0 border-[#9dbce8] bg-[#f0f6fe]" : "")}>{t}</button>
        ))}
        <svg viewBox="0 0 64 12" className="mr-1 mb-0.5 ml-auto h-3 w-16" fill="none" stroke="#41619a"><circle cx="10" cy="6" r="4.500" fill="#3d66d6" stroke="#e7effc" /><circle cx="10" cy="6" r="5.500" /><path d="M8.500 5c0-2 3-2 3 0 0 1-1.500 1-1.500 2" stroke="#fff" /><path d="M24 8.500h5M40 3.500h5v4h-5zM40 4.500h5M57 3l5 6M62 3l-5 6" strokeWidth="1.300" /></svg>
      </nav>
      <Ribbon />
      <div className="flex h-[20px] items-center border-b border-[#5f7fb3] bg-[#b9cfea] pt-0.5 text-[9px]">
        <span className="relative flex h-4 w-[118px] items-center bg-white">
          <input aria-label="Name box" defaultValue="J33" className="w-[106px] text-center text-black outline-none" />
          <span className="absolute top-1.5 right-1"><svg viewBox="0 0 5 3" className="h-[3px] w-[5px]"><path d="M0 0h5L2.500 3z" /></svg></span>
        </span>
        <span className="ml-0.5 flex h-4 w-[64px] items-center justify-between rounded-l-full border border-[#8fa9d0] bg-linear-to-b from-[#e2ebf8] to-[#a9c0e4] px-1 font-['Liberation_Serif',serif] text-[10px] font-bold text-[#333] italic"><span className="size-1.5 rounded-full bg-[#b5c4de]" />fx</span>
        <input aria-label="Formula bar" className="h-4 min-w-0 flex-1 bg-white outline-none" />
        <button aria-label="Expand formula bar" className="flex h-4 w-[11px] items-center justify-center border border-[#6f8fc4] bg-[#dbe7f8]"><svg viewBox="0 0 6 8" className="h-2 w-1.5" fill="none" stroke="#111" strokeWidth="1.200"><path d="m.5.500 2.500 2.500L5.500.500M.5 4 3 6.500 5.500 4" /></svg></button>
      </div>
      <Sheet />
      <SheetTabs />
      <StatusBar />
      <svg viewBox="0 0 30 30" className="absolute top-0.5 left-0.5 size-[30px]">
        <circle cx="14" cy="15" r="13.500" fill="#dcdfe6" stroke="#a3aab8" />
        <circle cx="14" cy="13" r="10.500" fill="#eff0f4" />
        <g fill="none" strokeWidth="2.500"><path d="M7 9h7v7H7z" stroke="#dd5620" /><path d="M15.500 10.500h5v4h-5z" stroke="#3d7fcf" /><path d="M8.500 17.500h5v4h-5z" stroke="#4a8fd8" /><path d="M15 16.500h6v5h-6z" stroke="#e0ae28" /></g>
        <path d="M17 17h5v4h-5z" fill="#5aa64b" />
      </svg>
    </div>
  );
}

/* ---------- chat ---------- */

const MESSAGES = [
  { from: "<JagannathBehera>  <B.Sc>", who: "<<", color: "bg-[#ff9d0b]", lines: ["so this chart is 16+", "years evolved version.."] },
  { from: "Lamba, Rashi | L", who: "LR", color: "bg-[#1f9d5b]", lines: ["hhud?"], broken: true },
  { from: "Lakshmi", who: "L", color: "bg-[#0b9283]", lines: ["yes"] },
  { from: "Radha Shinde", who: "RS", color: "bg-[#8e4fae]", lines: ["yes"] },
  { from: "Shivam Deshmukh", who: "SD", color: "bg-[#0b9283]", lines: ["yes"] },
  { from: "<Sudarshan> <9 AM>", who: "<A", color: "bg-[#31475c]", lines: ["heterogeneous,", "homogenous, unique,", "dublicate"] },
];

function Chat() {
  return (
    <aside className="flex w-[292px] shrink-0 flex-col bg-white text-[#6e7080]">
      <div className="relative flex flex-1 flex-col justify-between border-t-2 border-[#555] pt-1.5 pb-[15px] pl-5">
        {MESSAGES.map((m) => (
          <article key={m.from} className="relative flex gap-[9px]">
            <span className={"mt-[21px] flex size-[26px] items-center justify-center rounded-[7px] text-[11px] text-white " + m.color}>{m.who}</span>
            <div>
              <p className="text-[11px] leading-[18px] whitespace-pre">
                {m.from}
                {m.broken
                  ? <><span className="ml-6">to </span><span className="text-[#1f6fe0]">E</span><span className="ml-5 text-[#1f6fe0]">yone</span></>
                  : <> to <span className="text-[#1f6fe0]">Everyone</span></>}
              </p>
              <div className="mt-px flex min-h-[34px] w-fit flex-col justify-center rounded-[12px] bg-[#f1f1f6] px-[9px] py-[7px] text-[13px] leading-[18px] text-[#3f4048]">
                {m.lines.map((l) => <span key={l}>{l}</span>)}
              </div>
            </div>
            {m.broken && <span className="absolute -top-0.5 left-[140px] h-[62px] w-px bg-[#d9d9dc]" />}
          </article>
        ))}
        <span className="absolute inset-y-0 right-0 w-[5px] bg-[#f5f5fa]" />
        <span className="absolute right-0 bottom-0.5 size-1.5 rounded-full bg-[#a5a5ad]" />
      </div>
      <div className="flex h-[23px] items-center justify-center gap-0.5 border-b border-[#e6e6ee] bg-[#f7f7fb] pl-3 text-[11px]">
        <svg viewBox="0 0 14 14" className="size-3.5" fill="none" stroke="#6e7080" strokeWidth="1.200"><circle cx="6" cy="4" r="2.700" /><path d="M1.500 12.500c0-5 9-5 9 0z" /><path d="M9.500 7 13 8v3c0 2-3.500 3-3.500 3S6.500 13 6.500 11V8z" fill="#0e6bec" stroke="none" /></svg>
        Who can see your messages? Recording On
      </div>
      <div className="flex h-[112px] flex-col px-4 pt-3">
        <div className="flex items-center text-[11px]">
          <label htmlFor="recipient" className="w-[22px]">To:</label>
          <span className="relative flex h-5 w-[118px] items-center rounded-[6px] bg-[#f1f1f6]">
            <select id="recipient" className="w-full appearance-none bg-transparent pl-1.5 text-[10px] font-semibold text-[#33343c] outline-none"><option>Hosts and panelists</option></select>
            <ChevronDown className="pointer-events-none absolute right-1 size-3 text-[#33343c]" strokeWidth={2.500} />
          </span>
          <Smile className="mr-[-4px] ml-auto size-3.5" strokeWidth={1.500} />
        </div>
        <textarea aria-label="Message" placeholder="Your text can only be seen by panelists" className="mt-1.5 h-10 w-full resize-none text-[12px] outline-none placeholder:text-[#80828f]" />
      </div>
    </aside>
  );
}

/* ---------- player ---------- */

const PLAYER_GROUPS = [
  [["Previous", "M2 3v10M9 3v10L3 8zM15 3v10L9 8z", "fill"], ["Stop", "M3 3h10v10H3z", "fill"], ["Next", "M14 3v10M7 3v10l6-5zM1 3v10l6-5z", "fill"]],
  [["Full screen", "M1.500 5V1.500H5M11 1.500h3.500V5M14.500 11v3.500H11M5 14.500H1.500V11", "line"], ["Extended settings", "M3 1v14M1 5h4M8 1v14M6 11h4M13 1v14M11 7h4", "line"]],
  [["Playlist", "M1 2h14M1 6.500h14M1 11h9M12 10l4 3-4 3z", "line"], ["Loop", "M2 7V3h11M11 .500 14 3l-3 2.500M14 9v4H3M5 10.500 2 13l3 2.500", "line"], ["Shuffle", "M2 2l12 12M14 9v5H9M9 2h5v5M14 2 8.500 7.500M6.500 9.500 2 14", "line"]],
];

function Controls() {
  const progress = 64.2;
  return (
    <div className="h-[52px] shrink-0 bg-[#f0f0f0]">
      <div className="flex h-[19px] items-center px-[5px] text-[11px] text-black">
        <span className="w-[59px] pl-1">1:17:17</span>
        <input
          type="range"
          aria-label="Seek"
          step="0.1"
          defaultValue={progress}
          className="h-2 flex-1 appearance-none rounded-full [&::-webkit-slider-thumb]:opacity-0"
          style={{ background: `linear-gradient(to right, #2a80d2 ${progress}%, #cbcbcb ${progress}%)` }}
        />
        <span className="w-[55px] text-right">2:00:20</span>
      </div>
      <div className="flex h-[32px] items-center gap-3.5 px-1">
        <button aria-label="Play" className="flex size-[30px] items-center justify-center border border-[#adadad] bg-[#e1e1e1]"><svg viewBox="0 0 16 18" className="h-[18px] w-4"><path d="M1 0v18l14-9z" fill="#6e6e6e" /></svg></button>
        {PLAYER_GROUPS.map((g) => (
          <div key={g[0][0]} className="flex gap-0.5">
            {g.map(([name, d, mode]) => (
              <button key={name} aria-label={name} className="flex size-6 items-center justify-center border border-[#adadad] bg-[#e1e1e1]">
                <svg viewBox="0 0 16 16" className="size-4" fill={mode === "fill" ? "#777" : "none"} stroke="#777" strokeWidth={mode === "fill" ? "1.200" : "2"}><path d={d} /></svg>
              </button>
            ))}
          </div>
        ))}
        <div className="ml-auto flex items-end gap-1.5">
          <svg viewBox="0 0 16 14" className="h-3.5 w-4"><path d="M1 4h2.500L8 1v12L3.500 10H1z" fill="#777" /><path d="M10 4.500c1.500 1.500 1.500 3.500 0 5M12.500 2.500c2.500 2.500 2.500 6.500 0 9" fill="none" stroke="#f39a2b" strokeWidth="1.500" /></svg>
          <svg viewBox="0 0 74 26" className="h-[26px] w-[74px]">
            <defs><linearGradient id="vol"><stop offset="0" stopColor="#9bdc9b" /><stop offset=".7" stopColor="#19cf19" /><stop offset=".78" stopColor="#30d020" /><stop offset=".86" stopColor="#f4c21c" /><stop offset="1" stopColor="#f5381a" /></linearGradient></defs>
            <path d="M1 23 73 4v20H2z" fill="url(#vol)" stroke="#777" strokeLinejoin="round" strokeWidth="1.300" />
            <text x="4" y="12" fontSize="10" fontFamily="Open Sans, sans-serif" fill="#707070">125%</text>
          </svg>
        </div>
      </div>
    </div>
  );
}

const MENU = [["", "M", "edia"], ["P", "l", "ayback"], ["", "A", "udio"], ["", "V", "ideo"], ["Subti", "t", "le"], ["Tool", "s", ""], ["V", "i", "ew"], ["", "H", "elp"]];

export default function App() {
  return (
    <div className="flex min-h-screen flex-col bg-white font-['Open_Sans',sans-serif]">
      <header className="flex h-[24px] shrink-0 items-center gap-1 pl-0.5 text-[12px] text-black">
        <Cone className="size-4" />
        <h1 className="text-[11px]">1014 HK_CoreJava_01_03_2022_collection.mp4 - VLC media player</h1>
        <div className="ml-auto flex">
          {[["Minimise", "M0 5.500h10"], ["Restore", "M.5 2.500h7v7h-7zM2.500 2.500v-2h7v7h-2"], ["Close", "M0 0l10 10M10 0 0 10"]].map(([n, d]) => (
            <button key={n} aria-label={n} className="flex w-[46px] justify-center"><svg viewBox="0 0 10 10" className="size-2.5 overflow-visible" fill="none" stroke="#000"><path d={d} /></svg></button>
          ))}
        </div>
      </header>
      <nav className="flex h-[20px] shrink-0 items-center gap-4 pl-2 text-[12px] text-black">
        {MENU.map(([a, k, b]) => <button key={a + k + b}>{a}<u>{k}</u>{b}</button>)}
      </nav>
      <main className="flex flex-1 flex-col bg-black pr-[53px] pl-[54px]">
        <div className="flex flex-1">
          <div className="min-w-0 flex-1 bg-[#1a1a1a]"><Excel /></div>
          <Chat />
        </div>
        <InnerTaskbar />
      </main>
      <Controls />
      <OuterTaskbar />
    </div>
  );
}
